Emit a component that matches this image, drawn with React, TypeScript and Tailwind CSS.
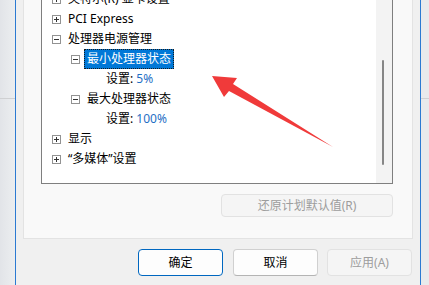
import React from "react";

const FONT = { fontFamily: '"Noto Sans", "Noto Sans CJK SC", sans-serif' };

function Expander({ open }: { open: boolean }) {
  return (
    <svg width="9" height="9" viewBox="0 0 9 9" className="shrink-0">
      <rect x="0.5" y="0.5" width="8" height="8" fill="#ffffff" stroke="#929292" />
      <line x1="2" y1="4.5" x2="7" y2="4.5" stroke="#333333" />
      {!open && <line x1="4.5" y1="2" x2="4.5" y2="7" stroke="#333333" />}
    </svg>
  );
}

function Node({
  level,
  open,
  label,
  selected,
}: {
  level: 0 | 1;
  open: boolean;
  label: string;
  selected?: boolean;
}) {
  return (
    <div className={`h-[20px] flex items-center ${level === 0 ? "pl-[10px]" : "pl-[29px]"}`}>
      <Expander open={open} />
      <span
        className={`ml-[4px] px-[2px] h-[20px] leading-[18px] whitespace-nowrap border ${
          selected ? "bg-[#0078d7] text-white border-dotted border-[#1a1a1a]" : "border-transparent text-black"
        }`}
      >
        {label}
      </span>
    </div>
  );
}

function Leaf({ value }: { value: string }) {
  return (
    <div className="h-[20px] flex items-center pl-[61px]">
      <span className="px-[2px] whitespace-nowrap text-black border border-transparent leading-[18px]">
        设置: <span className="text-[#1f6fc5]">{value}</span>
      </span>
    </div>
  );
}

function Button({
  children,
  kind,
  className = "",
}: {
  children: React.ReactNode;
  kind: "default" | "normal" | "disabled";
  className?: string;
}) {
  const styles =
    kind === "default"
      ? "bg-[#fdfdfd] border-[#0067c0] text-black"
      : kind === "normal"
      ? "bg-[#fdfdfd] border-[#d0d0d0] border-b-[#b4b4b4] text-black"
      : "bg-[#f5f5f5] border-[#e2e2e2] text-[#9d9d9d]";
  return (
    <div
      className={`shrink-0 flex items-center justify-center rounded-[4px] border text-[12px] ${styles} ${className}`}
    >
      {children}
    </div>
  );
}

export default function App() {
  return (
    <div className="relative w-[429px] h-[285px] overflow-hidden bg-[#e8e9eb] flex" style={FONT}>
      {/* left outside strip */}
      <div className="w-[15px] shrink-0 flex flex-col bg-gradient-to-r from-[#e2e4e8] to-[#eceef0]">
        <div className="h-[99px] border-b border-[#cfd0d2]" />
      </div>

      {/* dialog window */}
      <div className="w-[406px] shrink-0 h-[294px] bg-[#f0f0f0] border-x border-b border-[#2c7ad2] rounded-b-[8px] flex flex-col">
        {/* property panel */}
        <div className="ml-[7px] w-[390px] h-[239px] bg-[#f9f9f9] border-x border-b border-[#e3e3e3] pl-[17px] flex flex-col">
          <div className="w-[352px] flex flex-col items-end">
            {/* tree box */}
            <div className="w-[352px] h-[184px] bg-white border-x border-b border-[#7f7f7f] flex overflow-hidden">
              <div className="flex-1 -mt-[11px] text-[12px]">
                <Node level={0} open={false} label="英特尔(R) 显卡设置" />
                <Node level={0} open={false} label="PCI Express" />
                <Node level={0} open={true} label="处理器电源管理" />
                <Node level={1} open={true} label="最小处理器状态" selected />
                <Leaf value="5%" />
                <Node level={1} open={true} label="最大处理器状态" />
                <Leaf value="100%" />
                <Node level={0} open={false} label="显示" />
                <Node level={0} open={false} label="“多媒体”设置" />
              </div>
              <div className="w-[16px] shrink-0 bg-[#f3f3f3] flex flex-col">
                <div className="ml-[6px] mt-[60px] w-[2px] h-[105px] rounded-full bg-[#868686]" />
              </div>
            </div>
            <Button kind="disabled" className="mt-[10px] w-[172px] h-[23px]">
              还原计划默认值(R)
            </Button>
          </div>
        </div>

        {/* bottom buttons */}
        <div className="mt-[10px] flex">
          <Button kind="default" className="ml-[122px] w-[85px] h-[27px]">
            确定
          </Button>
          <Button kind="normal" className="ml-[10px] w-[85px] h-[27px]">
            取消
          </Button>
          <Button kind="disabled" className="ml-[9px] w-[85px] h-[27px]">
            应用(A)
          </Button>
        </div>
      </div>

      {/* right outside strip */}
      <div className="w-[8px] shrink-0 flex flex-col bg-[#e9eaec]">
        <div className="h-[99px] border-b border-[#cfd0d2]" />
      </div>

      {/* red annotation arrow */}
      <svg
        className="absolute left-0 top-0 pointer-events-none"
        width="429"
        height="285"
        viewBox="0 0 429 285"
      >
        <polygon
          points="212,76 237,78 233,84 333,147 229,91 224,97"
          fill="#f03a3a"
        />
      </svg>
    </div>
  );
}
